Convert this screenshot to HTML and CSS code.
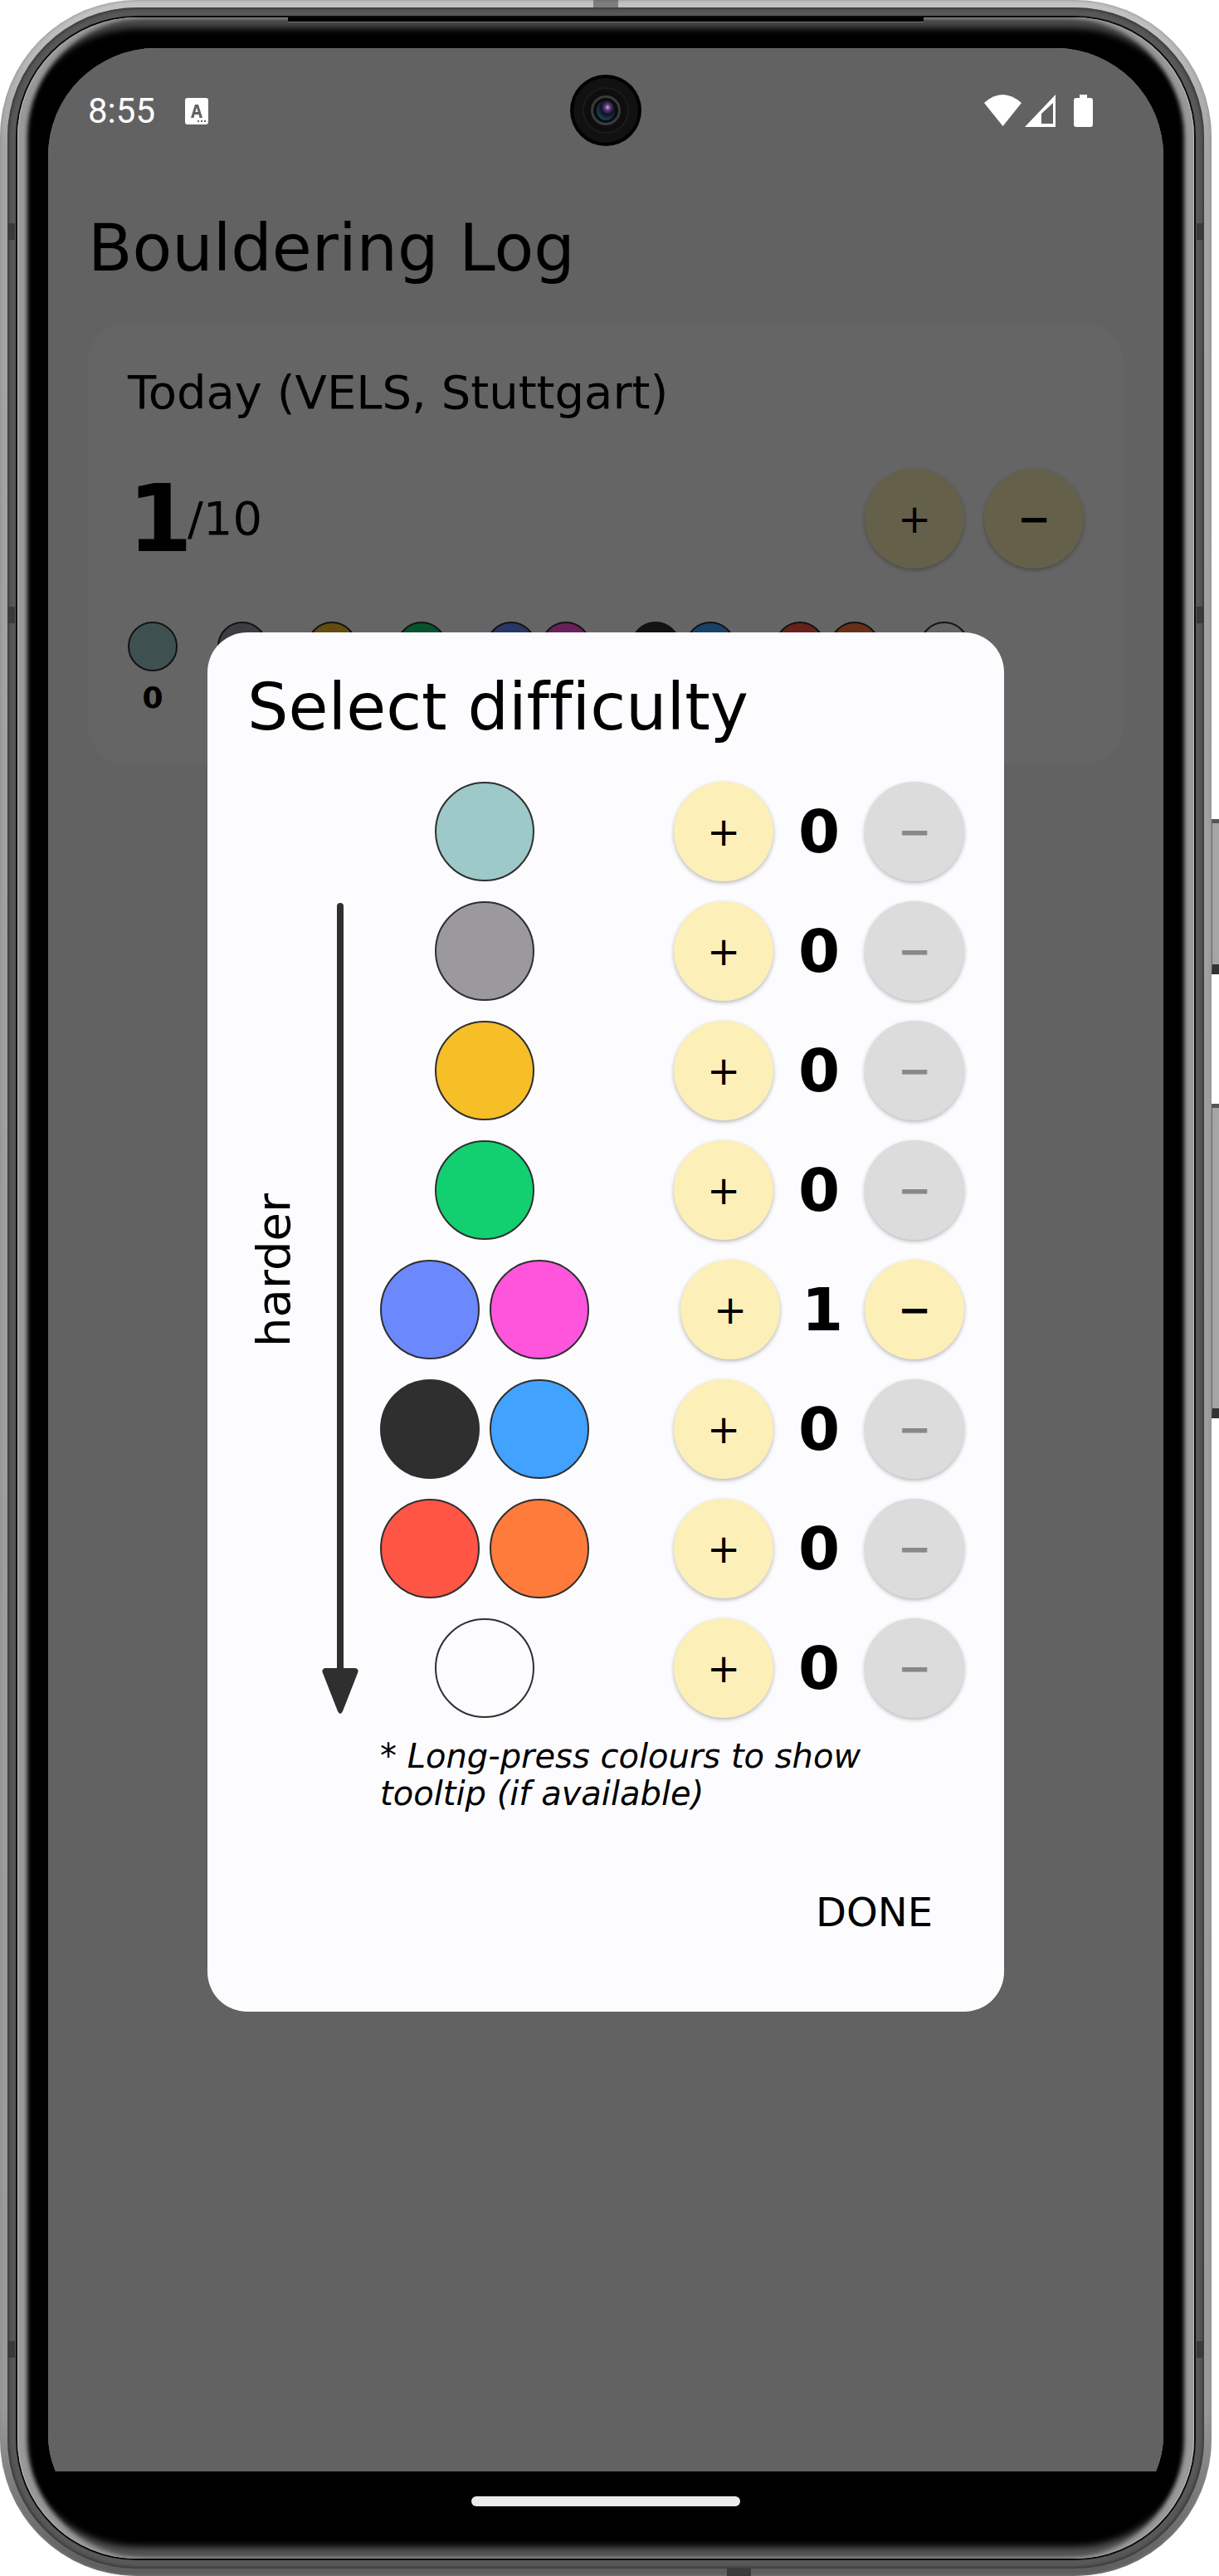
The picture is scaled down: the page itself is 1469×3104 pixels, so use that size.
FILE: index.html
```html
<!DOCTYPE html>
<html lang="en">
<head>
<meta charset="utf-8">
<meta name="viewport" content="width=device-width, initial-scale=1">
<title>Bouldering Log</title>
<link rel="stylesheet" href="styles.css">
</head>
<body>
<div class="phone">
  <span class="side-key side-key--power"></span>
  <span class="side-key side-key--volume"></span>
  <span class="band band--top"></span>
  <span class="band band--bottom"></span>
  <div class="rim">
    <span class="band band--left band--high"></span>
    <span class="band band--right band--high"></span>
    <span class="band band--left band--mid"></span>
    <span class="band band--right band--mid"></span>
    <span class="band band--left band--low"></span>
    <span class="band band--right band--low"></span>
    <div class="seam">
      <div class="glass">
        <span class="speaker"></span>
        <div class="screen">
          <div class="viewport">
            <div class="status-bar">
              <time class="clock">8:55</time>
              <svg class="status-app" viewBox="0 0 28 32" width="28" height="32" aria-hidden="true">
                <rect width="28" height="32" rx="3" fill="#fff"/>
                <path d="M7 24 L12 8 H16 L21 24 H17.500 L16.500 20 H11.500 L10.500 24Z M12.400 17 H15.600 L14 11.500Z" fill="#626262" fill-rule="evenodd"/>
                <rect x="15" y="27" width="2" height="2" fill="#626262"/><rect x="19" y="27" width="2" height="2" fill="#626262"/><rect x="23" y="27" width="2" height="2" fill="#626262"/>
              </svg>
              <svg class="status-icons" viewBox="0 0 132 40" width="132" height="40" aria-hidden="true">
                <g fill="#fff">
                  <path d="M0 10 Q22 -10 45 10 L22.500 38Z"/>
                  <path d="M86 0 V39 H49Z M83 10 L69 23 V35 H83Z" fill-rule="evenodd"/>
                  <path d="M115 0 h9 v4 h4 a3 3 0 0 1 3 3 v29 a3 3 0 0 1 -3 3 h-17 a3 3 0 0 1 -3 -3 v-29 a3 3 0 0 1 3 -3 h4z"/>
                </g>
              </svg>
            </div>
            <svg class="camera" viewBox="0 0 88 88" width="88" height="88" aria-hidden="true">
              <defs>
                <radialGradient id="lens" cx="0.600" cy="0.350" r="0.600">
                  <stop offset="0" stop-color="#d9a8ee"/><stop offset="0.250" stop-color="#5a3a78"/><stop offset="0.600" stop-color="#12101f"/><stop offset="1" stop-color="#14404e"/>
                </radialGradient>
              </defs>
              <circle cx="44" cy="44" r="43" fill="#000"/>
              <circle cx="44" cy="44" r="39" fill="#111"/>
              <circle cx="44" cy="44" r="27" fill="#0e0e0e" stroke="#1b1b1b" stroke-width="2"/>
              <circle cx="44" cy="44" r="18" fill="#3b3b3b"/>
              <circle cx="44" cy="44" r="15" fill="#0a0a10"/>
              <ellipse cx="44" cy="44" rx="11" ry="12" fill="url(#lens)"/>
            </svg>

            <main class="app">
              <h1 class="app-title">Bouldering Log</h1>
              <section class="card">
                <h2 class="card-title">Today (VELS, Stuttgart)</h2>
                <div class="tally">
                  <p class="tally-text"><strong class="tally-count">1</strong><span class="tally-goal">/10</span></p>
                  <div class="tally-buttons">
                    <button class="round" type="button" aria-label="Add">+</button>
                    <button class="round round--minus" type="button" aria-label="Remove">−</button>
                  </div>
                </div>
                <ul class="summary">
                  <li class="summary-item"><span class="dots"><i class="dot teal"></i></span><b>0</b></li>
                  <li class="summary-item"><span class="dots"><i class="dot grey"></i></span></li>
                  <li class="summary-item"><span class="dots"><i class="dot yellow"></i></span></li>
                  <li class="summary-item"><span class="dots"><i class="dot green"></i></span></li>
                  <li class="summary-item"><span class="dots"><i class="dot indigo"></i><i class="dot pink"></i></span></li>
                  <li class="summary-item"><span class="dots"><i class="dot black"></i><i class="dot blue"></i></span></li>
                  <li class="summary-item"><span class="dots"><i class="dot red"></i><i class="dot orange"></i></span></li>
                  <li class="summary-item"><span class="dots"><i class="dot white"></i></span></li>
                </ul>
              </section>
            </main>

            <div class="scrim">
              <section class="dialog" role="dialog" aria-labelledby="dialog-title">
                <h2 class="dialog-title" id="dialog-title">Select difficulty</h2>
                <div class="picker">
                  <div class="axis-label"><span class="axis-text">harder</span></div>
                  <div class="arrow">
                    <span class="arrow-shaft"></span>
                    <svg class="arrow-head" viewBox="0 0 44 56" width="44" height="56" aria-hidden="true"><path d="M4 0 H40 Q45 1 43 6 L25 52 Q22 58 19 52 L1 6 Q-1 1 4 0Z" fill="#2f2f30"/></svg>
                  </div>
                  <ul class="grades">
                    <li class="grade"><span class="swatches"><i class="swatch teal"></i></span><span class="stepper"><button class="round" type="button" aria-label="Add">+</button><output class="count">0</output><button class="round round--minus" type="button" aria-label="Remove" disabled>−</button></span></li>
                    <li class="grade"><span class="swatches"><i class="swatch grey"></i></span><span class="stepper"><button class="round" type="button" aria-label="Add">+</button><output class="count">0</output><button class="round round--minus" type="button" aria-label="Remove" disabled>−</button></span></li>
                    <li class="grade"><span class="swatches"><i class="swatch yellow"></i></span><span class="stepper"><button class="round" type="button" aria-label="Add">+</button><output class="count">0</output><button class="round round--minus" type="button" aria-label="Remove" disabled>−</button></span></li>
                    <li class="grade"><span class="swatches"><i class="swatch green"></i></span><span class="stepper"><button class="round" type="button" aria-label="Add">+</button><output class="count">0</output><button class="round round--minus" type="button" aria-label="Remove" disabled>−</button></span></li>
                    <li class="grade"><span class="swatches"><i class="swatch indigo"></i><i class="swatch pink"></i></span><span class="stepper"><button class="round" type="button" aria-label="Add">+</button><output class="count count--one">1</output><button class="round round--minus" type="button" aria-label="Remove">−</button></span></li>
                    <li class="grade"><span class="swatches"><i class="swatch black"></i><i class="swatch blue"></i></span><span class="stepper"><button class="round" type="button" aria-label="Add">+</button><output class="count">0</output><button class="round round--minus" type="button" aria-label="Remove" disabled>−</button></span></li>
                    <li class="grade"><span class="swatches"><i class="swatch red"></i><i class="swatch orange"></i></span><span class="stepper"><button class="round" type="button" aria-label="Add">+</button><output class="count">0</output><button class="round round--minus" type="button" aria-label="Remove" disabled>−</button></span></li>
                    <li class="grade"><span class="swatches"><i class="swatch white"></i></span><span class="stepper"><button class="round" type="button" aria-label="Add">+</button><output class="count">0</output><button class="round round--minus" type="button" aria-label="Remove" disabled>−</button></span></li>
                  </ul>
                  <p class="note">* Long-press colours to show tooltip (if available)</p>
                </div>
                <div class="actions"><button class="done" type="button">DONE</button></div>
              </section>
            </div>
          </div>
          <div class="nav-bar"><span class="home-pill"></span></div>
        </div>
      </div>
    </div>
  </div>
</div>
</body>
</html>
```

FILE: styles.css
```css
* { box-sizing: border-box; }

body {
  margin: 0;
  background: #fff;
  color: #000;
  font-family: "DejaVu Sans", sans-serif;
  font-variant-ligatures: none;
}

h1, h2, p, ul { margin: 0; padding: 0; font-weight: 400; }
ul { list-style: none; }

/* Phone body: nested rings, each with its own corner radius */
.phone {
  position: relative;
  display: grid;
  min-height: 100vh;
  margin-right: 9px;
  padding: 9px;
  border-radius: 165px;
  background: linear-gradient(#c4c4c4, #a4a4a4 180px, #999 calc(100% - 200px), #5c5c5c);
  box-shadow: inset 0 0 4px #888;
}
.rim {
  position: relative;
  display: grid;
  padding: 10px;
  border-radius: 156px;
  background: #585858;
  box-shadow: inset 0 0 4px 1px #2c2c2c;
}
.seam {
  display: grid;
  padding: 2px;
  border-radius: 146px;
  background: #0a0a0a;
}
.glass {
  position: relative;
  display: grid;
  padding: 37px;
  border-radius: 144px;
  background: #000;
  box-shadow:
    inset 1px 0 0 #bbb,
    inset -1px 0 0 #bbb,
    inset 12px 0 5px #999,
    inset -12px 0 5px #999,
    inset 0 13px 9px #4a4a4a,
    inset 0 -14px 9px #555;
}
.speaker {
  position: absolute;
  top: 0;
  left: 23%;
  right: 23%;
  height: 6px;
  background: #000;
  border-bottom: 1px solid #777;
}

.side-key {
  position: absolute;
  left: 100%;
  width: 9px;
  border-top: 5px solid #555;
  border-bottom: 12px solid #333;
  border-left: 1px solid #666;
  background: #a5a5a5;
}
.side-key--power { top: 987px; height: 187px; }
.side-key--volume { top: 1330px; height: 379px; }

.band { position: absolute; background: #3a3a3a; }
.band--top { top: 0; left: 49%; width: 30px; height: 18px; opacity: 0.5; }
.band--bottom { bottom: 0; left: 60%; width: 29px; height: 10px; }
.band--left, .band--right { width: 9px; height: 20px; }
.band--left { left: 0; }
.band--right { right: 0; }
.band--high { top: 260px; }
.band--mid { top: 722px; }
.band--low { bottom: 254px; }

/* Screen */
.screen {
  display: flex;
  flex-direction: column;
  overflow: hidden;
  border-radius: 130px 130px 112px 112px;
  background: #000;
}
.viewport {
  position: relative;
  flex: 1;
  background: #f5f5f5;
}
.status-bar {
  position: relative;
  z-index: 2;
  display: flex;
  align-items: center;
  height: 152px;
  padding: 0 84px 0 48px;
  color: #fff;
}
.clock {
  font: 42px/48px Roboto, sans-serif;
}
.status-app { margin-left: 36px; }
.status-icons { margin-left: auto; }
.camera {
  position: absolute;
  z-index: 2;
  top: 31px;
  left: calc(50% - 44px);
}

.app { padding: 0 48px; }
.app-title {
  font-size: 78px;
  line-height: 179px;
}
.card {
  padding: 48px 48px 56px;
  border-radius: 48px;
  background: #fcfcfd;
}
.card-title {
  font-size: 56px;
  line-height: 72px;
}
.tally {
  display: flex;
  align-items: center;
  justify-content: space-between;
  margin: 56px 0 64px;
}
.tally-text { display: flex; align-items: center; }
.tally-count { font-size: 112px; line-height: 120px; margin-right: -6px; }
.tally-goal { font-size: 56px; line-height: 72px; }
.tally-buttons { display: flex; gap: 24px; }

.summary { display: flex; align-items: start; gap: 48px; }
.summary-item {
  display: grid;
  gap: 8px;
  justify-items: center;
  font-size: 36px;
  line-height: 48px;
}
.dots { display: flex; gap: 6px; }
.dot, .swatch {
  border: 2px solid #2f2f30;
  border-radius: 50%;
}
.dot { width: 60px; height: 60px; }
.swatch { width: 120px; height: 120px; }

.teal { background: #9dc9c9; }
.grey { background: #9b999e; }
.yellow { background: #f6be27; }
.green { background: #12d070; }
.indigo { background: #6b88fd; }
.pink { background: #ff55dd; }
.black { background: #2f2f30; }
.blue { background: #41a2ff; }
.red { background: #ff5545; }
.orange { background: #ff7b3b; }
.white { background: #fcfcff; }

.round {
  width: 120px;
  height: 120px;
  padding: 0;
  border: 0;
  border-radius: 50%;
  background: #fcefb8;
  box-shadow: 0 2px 5px rgba(0, 0, 0, 0.28);
  color: #000;
  font: 48px/120px "DejaVu Sans", sans-serif;
}
.round--minus { font-weight: 700; }
.round:disabled { background: #dcdcdc; color: #888; }

/* Dialog over the dimmed page, centred below the status bar */
.scrim {
  position: absolute;
  inset: 0;
  z-index: 1;
  display: flex;
  align-items: center;
  justify-content: center;
  padding: 150px 192px 0;
  background: rgba(0, 0, 0, 0.6);
}
.dialog {
  flex: 1;
  padding: 48px;
  border-radius: 48px;
  background: #fcfcfe;
}
.dialog-title {
  margin-bottom: 48px;
  font-size: 78px;
  line-height: 84px;
}
.picker {
  display: grid;
  grid-template-columns: 64px 44px 1fr;
  column-gap: 26px;
}
.axis-label {
  display: flex;
  align-items: center;
  justify-content: center;
  padding-top: 48px;
}
.axis-text {
  writing-mode: vertical-rl;
  transform: rotate(180deg);
  font-size: 56px;
  line-height: 60px;
}
.arrow {
  display: flex;
  flex-direction: column;
  align-items: center;
  padding: 146px 0 4px;
}
.arrow-shaft {
  flex: 1;
  width: 8px;
  border-radius: 4px 4px 0 0;
  background: #2f2f30;
}
.grades { display: grid; gap: 24px; }
.grade { display: flex; justify-content: space-between; }
.swatches {
  display: flex;
  justify-content: center;
  gap: 12px;
  width: 252px;
}
.stepper { display: flex; align-items: center; }
.count {
  width: 110px;
  text-align: center;
  font-size: 72px;
  font-weight: 700;
  line-height: 84px;
}
.count--one { width: 102px; }
.note {
  grid-column: 3;
  margin-top: 24px;
  font-size: 40px;
  font-style: italic;
  line-height: 45px;
}
.actions {
  display: flex;
  justify-content: flex-end;
  margin-top: 48px;
}
.done {
  height: 144px;
  padding: 0 38px;
  border: 0;
  background: none;
  color: #000;
  font: 48px/60px "DejaVu Sans", sans-serif;
}

.nav-bar {
  display: flex;
  align-items: center;
  justify-content: center;
  height: 68px;
  padding-top: 4px;
  background: #000;
}
.home-pill {
  width: 324px;
  height: 12px;
  border-radius: 6px;
  background: #ebebeb;
}
```
